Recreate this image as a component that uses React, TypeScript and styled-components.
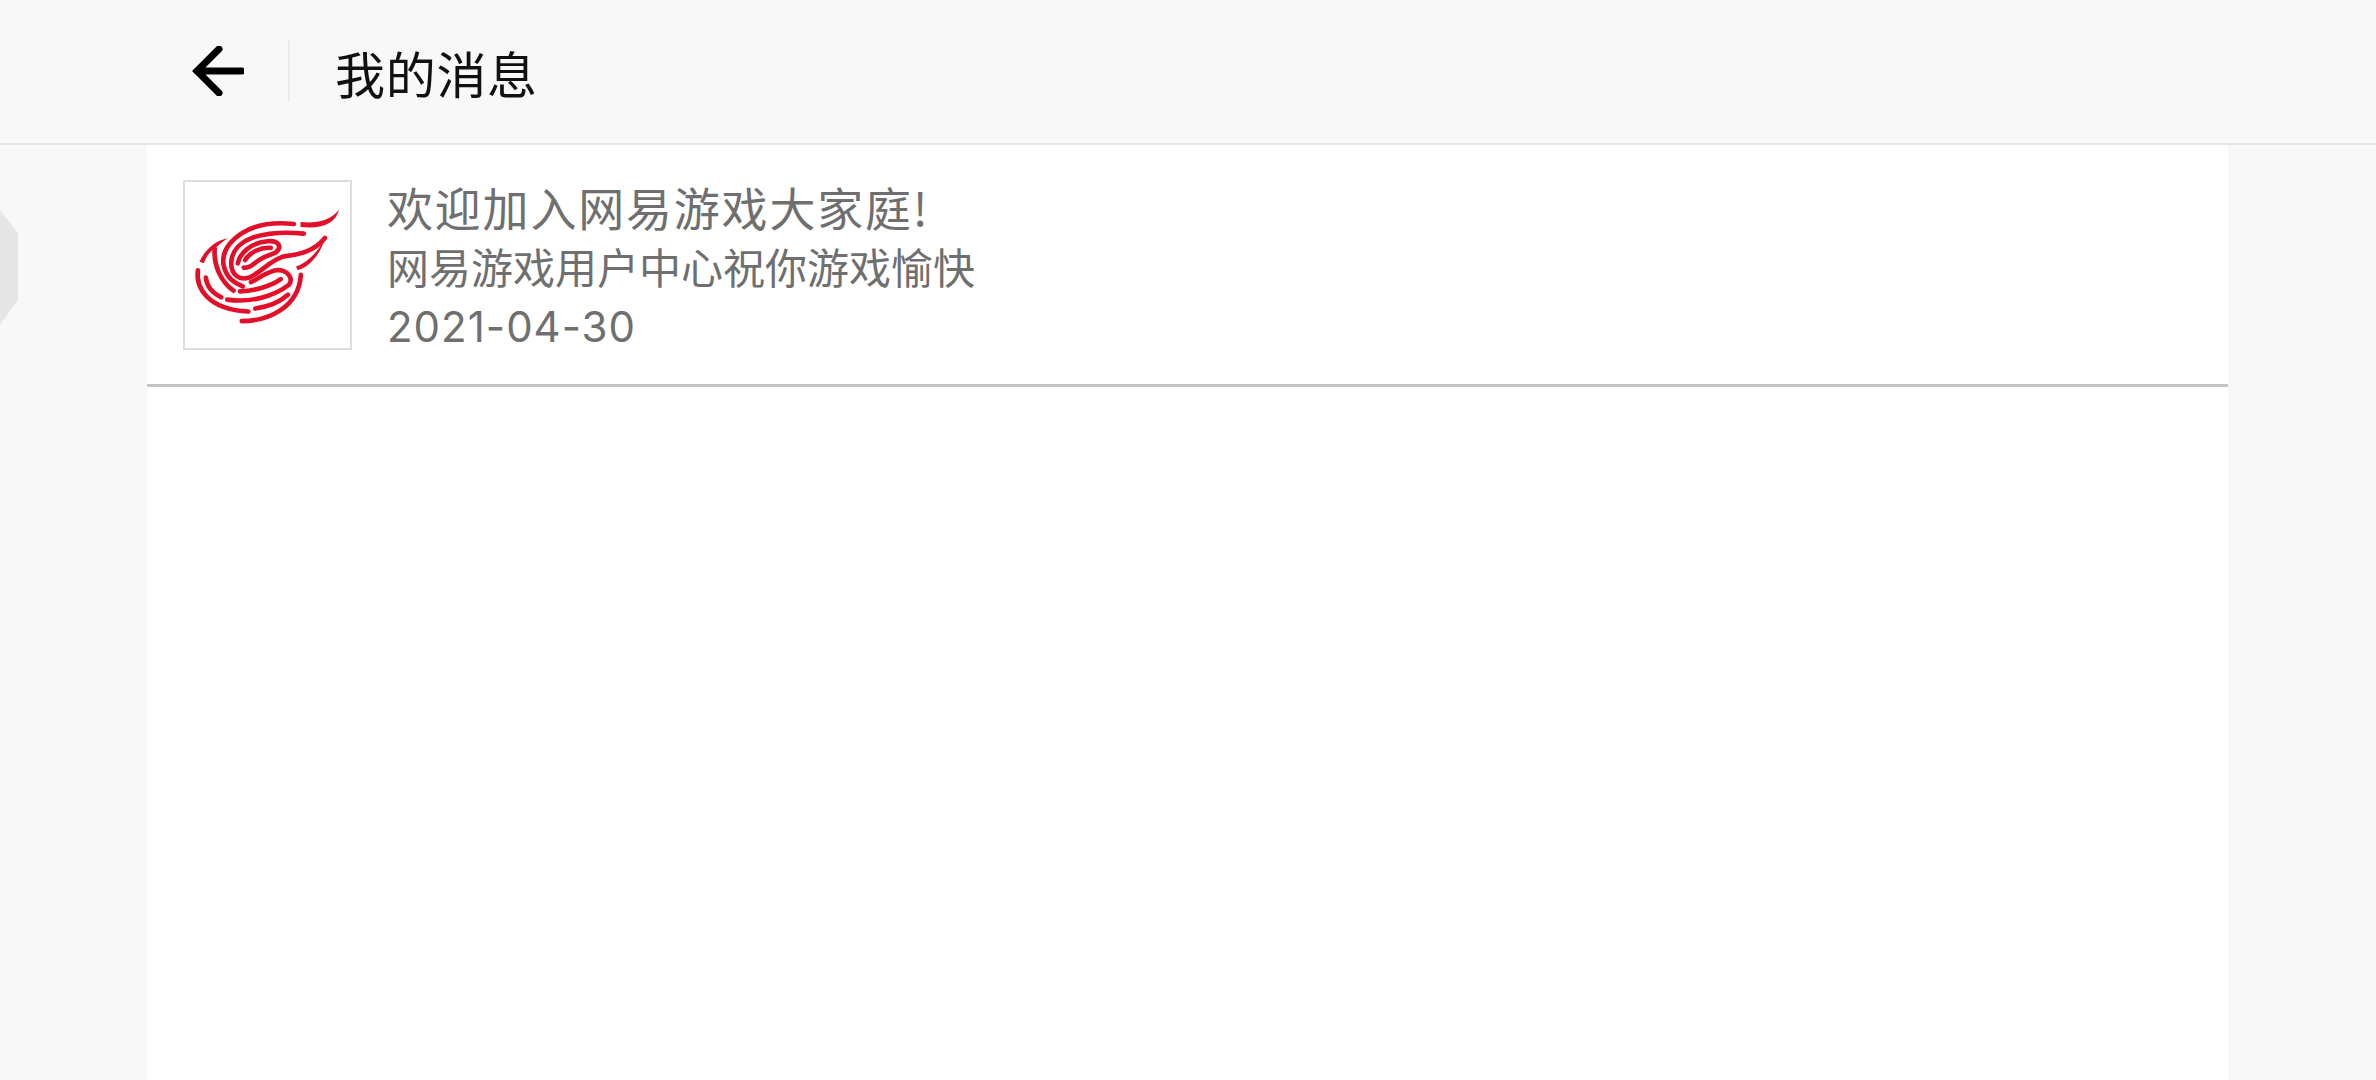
import React from "react";
import styled, { createGlobalStyle } from "styled-components";

const CJK = `"Noto Sans CJK SC", "Noto Sans", sans-serif`;

const GlobalStyle = createGlobalStyle`
  html, body {
    margin: 0;
    padding: 0;
    height: 100%;
    background: #f8f8f8;
    font-family: ${CJK};
  }
  * {
    box-sizing: border-box;
  }
`;

interface IMessage {
  title: string;
  desc: string;
  date: string;
}

const messages: IMessage[] = [
  {
    title: "欢迎加入网易游戏大家庭!",
    desc: "网易游戏用户中心祝你游戏愉快",
    date: "2021-04-30",
  },
];

function BackArrow() {
  return (
    <BackIcon viewBox="0 0 52 50" aria-hidden="true">
      <path d="M5 25 H50 M27 3 L5 25 L27 47" />
    </BackIcon>
  );
}

function NeteaseLogo() {
  return (
    <LogoIcon viewBox="40 30 500 500" aria-hidden="true">
      <g className="fill">
        <path d="M390 150 C432 154 478 150 507 112 C496 152 462 172 390 165 Z" />
        <path d="M170 199 C130 206 100 235 84 270 L97 275 C106 250 116 240 130 230 C145 218 155 208 170 199 Z" />
        <path d="M466 195 C452 240 425 282 382 296 L376 285 C420 268 445 235 466 195 Z" />
      </g>
      <g className="line">
        <path d="M370 156 C320 150 260 155 215 182 C175 208 150 240 157 280 C165 320 190 335 215 345" />
        <path d="M130 230 C126 280 148 330 187 358" />
        <path d="M103 318 C106 345 125 366 150 378" />
        <path d="M79 296 C72 350 110 415 232 421" />
        <path d="M212 450 C290 450 385 410 391 310" />
        <path d="M253 412 C300 405 335 385 352 370" />
        <path d="M168 385 C240 395 310 375 355 340 C370 320 350 295 320 295 C290 298 265 320 240 332" />
        <path d="M207 360 C250 358 300 345 330 323" />
        <path d="M464 198 C430 240 385 248 345 253 C300 262 275 300 235 318 C205 328 180 310 180 275 C180 240 205 212 245 197 C290 182 350 180 400 185" />
        <path d="M200 275 C205 245 240 212 290 208 C325 205 335 225 315 242 C300 250 275 255 255 272 C240 285 230 290 218 288" />
        <path d="M222 265 C235 242 270 225 300 228" />
      </g>
    </LogoIcon>
  );
}

function App() {
  return (
    <Page>
      <GlobalStyle />
      <Header>
        <BackArrow />
        <Separator />
        <PageTitle>我的消息</PageTitle>
      </Header>
      <Panel>
        {messages.map(m => (
          <MessageRow key={m.date}>
            <LogoBox>
              <NeteaseLogo />
            </LogoBox>
            <MessageText>
              <MessageTitle>{m.title}</MessageTitle>
              <MessageDesc>{m.desc}</MessageDesc>
              <MessageDate>{m.date}</MessageDate>
            </MessageText>
          </MessageRow>
        ))}
      </Panel>
      <EdgeHandle />
    </Page>
  );
}

const Page = styled.div`
  position: relative;
  display: flex;
  flex-direction: column;
  height: 1080px;
  overflow: hidden;
  background: #f8f8f8;
`;

const Header = styled.header`
  display: flex;
  align-items: center;
  flex: none;
  height: 145px;
  padding: 0 0 2px 192px;
  border-bottom: 2px solid #e6e6e6;
  background: #f8f8f8;
`;

const BackIcon = styled.svg`
  flex: none;
  width: 52px;
  height: 50px;

  & > path {
    fill: none;
    stroke: #000;
    stroke-width: 7;
    stroke-linecap: round;
    stroke-linejoin: miter;
  }
`;

const Separator = styled.div`
  flex: none;
  width: 2px;
  height: 62px;
  margin: 0 45px 0 44px;
  background: #ebebeb;
`;

const PageTitle = styled.h1`
  position: relative;
  top: 1px;
  margin: 0;
  font-size: 50px;
  font-weight: 400;
  line-height: 60px;
  letter-spacing: 0.7px;
  color: #111;
`;

const Panel = styled.main`
  flex: 1;
  width: 2081px;
  margin-left: 147px;
  background: #fff;
`;

const MessageRow = styled.div`
  display: flex;
  align-items: flex-start;
  height: 242px;
  padding: 35px 0 0 36px;
  border-bottom: 3px solid #c4c4c4;
`;

const LogoBox = styled.div`
  flex: none;
  width: 169px;
  height: 170px;
  border: 2px solid #dedede;
  background: #fff;
`;

const LogoIcon = styled.svg`
  display: block;
  width: 100%;
  height: 100%;

  & > .fill {
    fill: #e30f28;
  }
  & > .line {
    fill: none;
    stroke: #e30f28;
    stroke-width: 14;
    stroke-linecap: round;
  }
`;

const MessageText = styled.div`
  display: flex;
  flex-direction: column;
  margin: -4px 0 0 35px;
  color: #6f6f6f;
`;

const MessageTitle = styled.div`
  font-size: 46px;
  line-height: 60px;
  letter-spacing: 1.8px;
`;

const MessageDesc = styled.div`
  font-size: 42px;
  line-height: 60px;
`;

const MessageDate = styled.div`
  margin-top: 3px;
  font-family: Inter, "Noto Sans", sans-serif;
  font-size: 42px;
  line-height: 56px;
  font-weight: 400;
  letter-spacing: 1px;
`;

const EdgeHandle = styled.div`
  position: absolute;
  left: 0;
  top: 210px;
  width: 18px;
  height: 115px;
  background: #e6e6e6;
  clip-path: polygon(0 0, 100% 20%, 100% 78%, 0 100%);
`;

export default App;
